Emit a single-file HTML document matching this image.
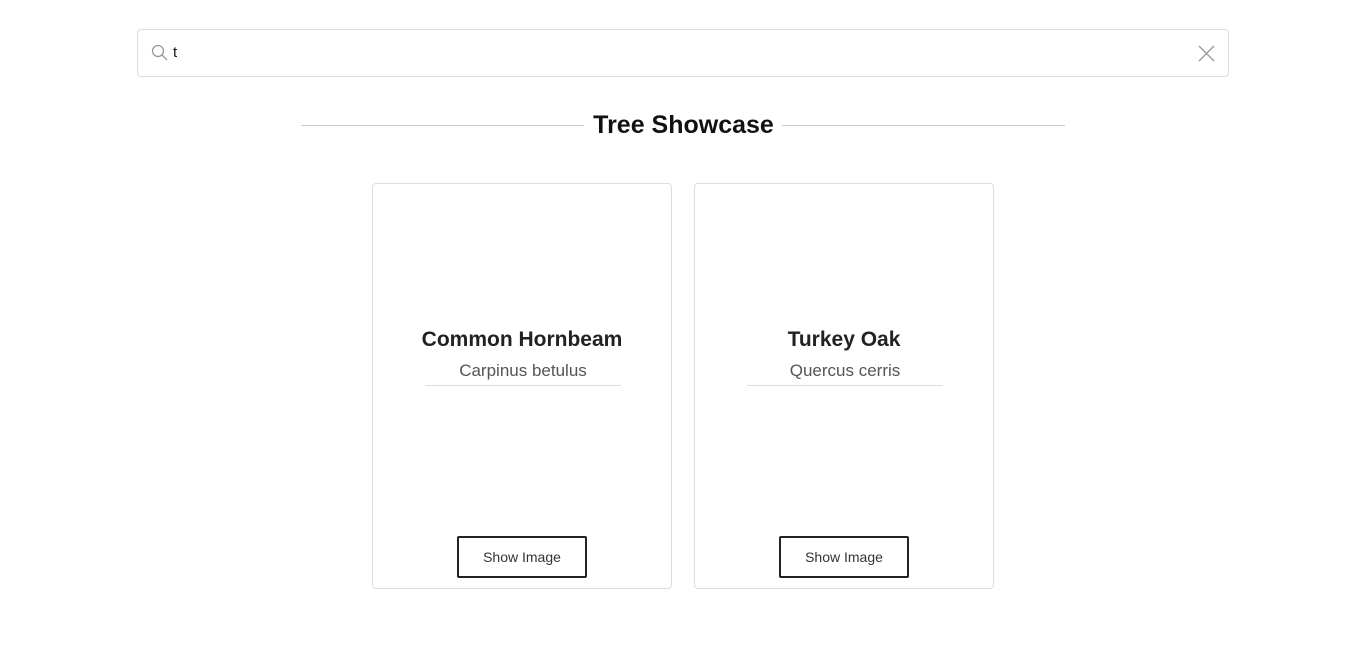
<!DOCTYPE html>
<html><head><meta charset="utf-8"><style>
*{box-sizing:border-box;margin:0;padding:0}
body{width:1351px;height:646px;background:#fff;font-family:"Liberation Sans",sans-serif;position:relative;overflow:hidden}
.search{position:absolute;left:137px;top:29px;width:1092px;height:48px;border:1px solid #ddd;border-radius:4px}
.search .t{position:absolute;left:35px;top:14px;font-size:15px;color:#111}
.title{position:absolute;top:111px;left:8px;width:1351px;text-align:center;font-size:25px;font-weight:bold;color:#111}
.line{position:absolute;top:125px;height:1px;background:#ccc}
.card{position:absolute;top:183px;width:300px;height:406px;border:1px solid #ddd;border-radius:4px;text-align:center}
.card h2{position:absolute;top:144px;width:100%;font-size:21px;font-weight:bold;color:#222}
.card p{position:absolute;top:177px;left:52px;width:196px;font-size:17px;color:#555;padding-bottom:4px;border-bottom:1px solid #ddd}
.btn{position:absolute;left:84px;top:352px;width:130px;height:42px;border:2px solid #222;border-radius:2px;font-size:14px;color:#333;line-height:38px}
</style></head><body>
<div class="search">
<svg style="position:absolute;left:13px;top:14px" width="18" height="18" viewBox="0 0 18 18"><circle cx="7" cy="7" r="5.5" fill="none" stroke="#999" stroke-width="1.3"/><line x1="11" y1="11" x2="16" y2="16" stroke="#999" stroke-width="1.3"/></svg>
<span class="t">t</span>
<svg style="position:absolute;right:13px;top:15px" width="17" height="17" viewBox="0 0 17 17"><path d="M1 1L16 16M16 1L1 16" stroke="#999" stroke-width="1.4"/></svg>
</div>
<div class="line" style="left:301px;width:283px"></div>
<div class="line" style="left:782px;width:283px"></div>
<div class="title">Tree Showcase</div>
<div class="card" style="left:372px"><h2>Common Hornbeam</h2><p>Carpinus betulus</p><div class="btn">Show Image</div></div>
<div class="card" style="left:694px"><h2>Turkey Oak</h2><p>Quercus cerris</p><div class="btn">Show Image</div></div>
</body></html>
